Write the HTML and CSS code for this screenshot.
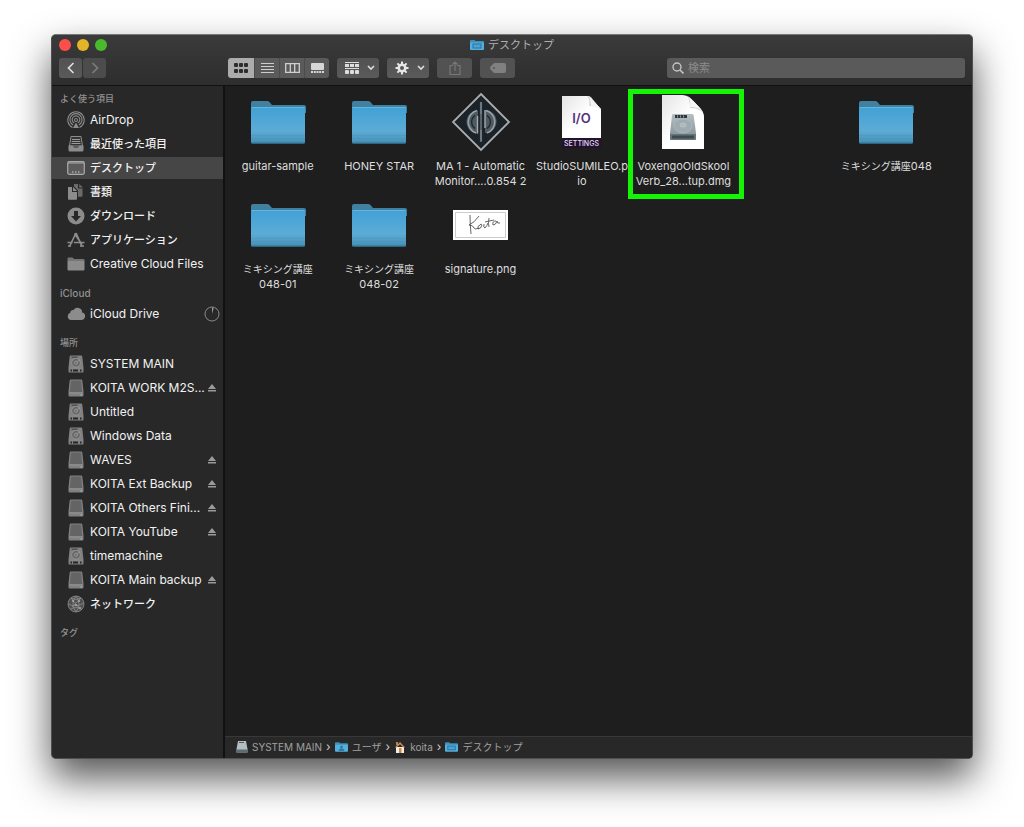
FILE: index.html
```html
<!DOCTYPE html>
<html lang="ja">
<head>
  <meta charset="UTF-8" />
  <meta name="viewport" content="width=device-width, initial-scale=1.0" />
  <title>デスクトップ</title>
  <link rel="stylesheet" href="styles.css">
</head>
<body>
  <!-- shared icons -->
  <svg class="sprite" aria-hidden="true">
    <defs>
      <linearGradient id="blue" x1="0" y1="0" x2="0" y2="1">
        <stop offset="0" stop-color="#41a1d6" />
        <stop offset="0.65" stop-color="#5cacd5" />
        <stop offset="0.85" stop-color="#4f9bc3" />
        <stop offset="1" stop-color="#478fb4" />
      </linearGradient>
      <linearGradient id="paper" x1="0" y1="0" x2="1" y2="1">
        <stop offset="0" stop-color="#e4e4e4" />
        <stop offset="0.5" stop-color="#fff" />
      </linearGradient>
      <linearGradient id="metal" x1="0" y1="0" x2="0" y2="1">
        <stop offset="0" stop-color="#b4bfc3" />
        <stop offset="1" stop-color="#7f8f94" />
      </linearGradient>
      <symbol id="folder" viewBox="0 0 56 44">
        <path d="M1 3q0-2 2-2h14q1.500 0 2.500 1l2 2.500q.5.500 1.500.500h31q2 0 2 2v6H1z" fill="#42809f" />
        <path d="M1 7.500h54V42q0 1.500-1.500 1.500h-51Q1 43.500 1 42z" fill="url(#blue)" />
        <path d="M1.500 7.500h53" stroke="#64b6df" />
        <path d="M1 35.500h54M1 38.500h54M1 41.500h54" stroke="#3f8bb2" stroke-opacity=".25" />
        <path d="M1.500 43h53" stroke="#2f7397" />
      </symbol>
      <symbol id="mini-folder" viewBox="0 0 14 12">
        <path d="M0 2q0-1 1-1h3.500l1 1H13q1 0 1 1v3H0z" fill="#3d8fbc" />
        <path d="M0 3.500h14V10q0 1-1 1H1q-1 0-1-1z" fill="#55afdc" />
      </symbol>
      <symbol id="drive" viewBox="0 0 16 18">
        <path d="M2.800.500h10.400q1 0 1.100 1l1.200 11v4q0 1-1 1h-13q-1 0-1-1v-4l1.200-11q.1-1 1.100-1z" fill="#808080" />
        <path d="M3 1.500h10l1.200 11.500H1.800z" fill="#646464" />
        <path d="M1.200 14h13.600" stroke="#949494" />
        <path d="M12.500 16h1.500" stroke="#bbb" />
      </symbol>
      <symbol id="disk" viewBox="0 0 16 18">
        <path d="M2.800.500h10.400q1 0 1.100 1l1.200 11v4q0 1-1 1h-13q-1 0-1-1v-4l1.200-11q.1-1 1.100-1z" fill="#808080" />
        <path d="M3.500 2.200h6" stroke="#3a3a3a" />
        <circle cx="8" cy="7.700" r="4.300" fill="#666" stroke="#999" stroke-width=".8" />
        <circle cx="8" cy="7.700" r="1.600" fill="none" stroke="#a4a4a4" stroke-width=".8" />
        <path d="M9 7.500l2.500-3" stroke="#a4a4a4" stroke-width=".8" />
        <path d="M1 13h14" stroke="#8c8c8c" />
        <path d="M2.500 15.500h1.500M5 15.500h5M12 15.500h1.500" stroke="#262626" stroke-width="2" />
      </symbol>
      <symbol id="eject" viewBox="0 0 8 8">
        <path d="M4 0l4 5H0zM0 6h8v1.500H0z" fill="#9a9a9a" />
      </symbol>
      <symbol id="chevron" viewBox="0 0 8 6">
        <path d="M1 1l3 3 3-3" fill="none" stroke="#dedede" stroke-width="1.600" />
      </symbol>
    </defs>
  </svg>

  <main class="window">
    <header class="titlebar">
      <div class="title-row">
        <div class="lights">
          <button class="light close" aria-label="閉じる"></button>
          <button class="light minimize" aria-label="しまう"></button>
          <button class="light full" aria-label="拡大"></button>
        </div>
        <h1 class="title">
          <svg class="title-icon" viewBox="0 0 14 12"><use href="#mini-folder" /><rect x="3" y="5" width="8" height="4" fill="#4aa3d4" stroke="#2a72a0" /></svg>
          デスクトップ
        </h1>
      </div>
      <div class="toolbar">
        <div class="nav">
          <button class="tool back" aria-label="戻る">
            <svg width="8" height="12" viewBox="0 0 8 12"><path d="M6.500 1L1.500 6l5 5" fill="none" stroke="#ddd" stroke-width="1.700" /></svg>
          </button>
          <button class="tool forward" aria-label="進む">
            <svg width="8" height="12" viewBox="0 0 8 12"><path d="M1.500 1l5 5-5 5" fill="none" stroke="#7c7c7c" stroke-width="1.700" /></svg>
          </button>
        </div>
        <div class="views">
          <button class="view active" aria-label="アイコン">
            <svg width="14" height="10" viewBox="0 0 14 10" fill="#2c2c2c"><rect width="4" height="4" rx="1" /><rect x="5" width="4" height="4" rx="1" /><rect x="10" width="4" height="4" rx="1" /><rect y="6" width="4" height="4" rx="1" /><rect x="5" y="6" width="4" height="4" rx="1" /><rect x="10" y="6" width="4" height="4" rx="1" /></svg>
          </button>
          <button class="view" aria-label="リスト">
            <svg width="13" height="10" viewBox="0 0 13 10"><path d="M0 .500h13M0 3.500h13M0 6.500h13M0 9.500h13" stroke="#ccc" /></svg>
          </button>
          <button class="view" aria-label="カラム">
            <svg width="15" height="10" viewBox="0 0 15 10"><path d="M.700.700h13.600v8.600H.700zM5.300.500v9M9.700.500v9" fill="none" stroke="#d0d0d0" stroke-width="1.300" /></svg>
          </button>
          <button class="view" aria-label="ギャラリー">
            <svg width="13" height="10" viewBox="0 0 13 10" fill="#d6d6d6"><rect width="13" height="7" rx="1" /><path d="M0 8h2v2H0zM2.800 8h2v2h-2zM5.500 8h2v2h-2zM8.200 8h2v2h-2zM11 8h2v2h-2z" /></svg>
          </button>
        </div>
        <button class="tool menu" aria-label="グループ分け">
          <svg width="14" height="12" viewBox="0 0 14 12" fill="#ddd"><path d="M0 0h14v1H0zM0 6h14v1H0z" /><rect y="2" width="4" height="3" /><rect x="5" y="2" width="4" height="3" /><rect x="10" y="2" width="4" height="3" /><rect y="8" width="4" height="4" rx="1" /><rect x="5" y="8" width="4" height="4" rx="1" /><rect x="10" y="8" width="4" height="4" rx="1" /></svg>
          <svg width="8" height="6"><use href="#chevron" /></svg>
        </button>
        <button class="tool menu" aria-label="アクション">
          <svg width="14" height="14" viewBox="-7 -7 14 14"><circle r="3.300" fill="none" stroke="#e6e6e6" stroke-width="2.600" /><path d="M0-6.500v2.500M0 4v2.500M-6.500 0h2.500M4 0h2.500M-4.600-4.600l1.800 1.800M2.800 2.800l1.800 1.800M-4.600 4.600l1.800-1.800M2.800-2.800l1.800-1.800" stroke="#e6e6e6" stroke-width="2" /></svg>
          <svg width="8" height="6"><use href="#chevron" /></svg>
        </button>
        <button class="tool single" aria-label="共有" disabled>
          <svg width="12" height="14" viewBox="0 0 12 14"><path d="M4 4.500H1v9h10v-9H8M6 10V1M3.500 3.500L6 1l2.500 2.500" fill="none" stroke="#777" stroke-width="1.200" /></svg>
        </button>
        <button class="tool single" aria-label="タグ" disabled>
          <svg width="16" height="10" viewBox="0 0 16 10"><path d="M4.500 0H14q2 0 2 2v6q0 2-2 2H4.500Q4 10 3 9L.500 6.200Q-.3 5 .500 3.800L3 1q1-1 1.500-1z" fill="#808080" /><circle cx="4" cy="5" r="1" fill="#555" /></svg>
        </button>
        <label class="search">
          <svg width="12" height="12" viewBox="0 0 12 12"><circle cx="5" cy="5" r="4" fill="none" stroke="#c4c4c4" stroke-width="1.400" /><path d="M8 8l3.500 3.500" stroke="#c4c4c4" stroke-width="1.600" /></svg>
          <input type="search" placeholder="検索" aria-label="検索" />
        </label>
      </div>
    </header>

    <div class="body">
      <nav class="sidebar">
        <h2 class="ja">よく使う項目</h2>
        <a href="#"><svg viewBox="0 0 18 18" fill="none" stroke="#8c8c8c" stroke-width="1.100"><path d="M5.500 16.400a8.200 8.200 0 1 1 7 0M6.200 13.900a6 6 0 1 1 5.600 0M7.200 12a3.800 3.800 0 1 1 3.600 0" /><circle cx="9" cy="9" r="1.500" /><path d="M9 11.500l-3 5.500h6z" fill="#8c8c8c" stroke="none" /></svg><span>AirDrop</span></a>
        <a href="#"><svg viewBox="0 0 18 18"><path d="M4 1.500h10l1.500 9.500H2.500z" fill="#333" stroke="#8c8c8c" /><path d="M5 4.500h8M4.700 6.500h8.600M4.500 8.500h9" stroke="#999" /><path d="M1.500 10.500h4l1.500 2h4l1.500-2h4V15q0 1.500-1.500 1.500H3Q1.500 16.500 1.500 15z" fill="#8c8c8c" /></svg><span class="ja">最近使った項目</span></a>
        <a href="#" class="selected"><svg viewBox="0 0 18 18"><rect x=".7" y="2.700" width="16.600" height="12.600" rx="1.500" fill="#5c5c5c" stroke="#aaa" stroke-width="1.200" /><path d="M1 4h16" stroke="#aaa" /><path d="M5 13h1.500M8 13h1.500M11 13h1.500" stroke="#ccc" /></svg><span class="ja">デスクトップ</span></a>
        <a href="#"><svg viewBox="0 0 18 18"><path d="M1 4h4v5h5v7q0 .800-.8.800H1.800Q1 16.800 1 16zM6 4l4 4H6z" fill="#8c8c8c" /><path d="M7 1h4v4.500h4.500V13q0 .800-.8.800H11V7.500L7 3.500zM12.200 1l3.800 3.500h-3.800z" fill="#6a6a6a" /></svg><span class="ja">書類</span></a>
        <a href="#"><svg viewBox="0 0 18 18"><circle cx="9" cy="9" r="8.500" fill="#8c8c8c" /><path d="M7 4h4v5h3l-5 5.500L4 9h3z" fill="#282828" /></svg><span class="ja">ダウンロード</span></a>
        <a href="#"><svg viewBox="0 0 18 18" fill="none" stroke="#8c8c8c"><path d="M9 2L2.500 15.500M9 2l6 13.500M7.500 2.500l7.500 11" stroke-width="1.700" /><path d="M.500 11.500h5M7 11.500h10.500M1 15h3M13 15h4" stroke-width="1.400" /></svg><span class="ja">アプリケーション</span></a>
        <a href="#"><svg viewBox="0 0 18 18"><path d="M.500 3.500q0-1 1-1h4l1.500 1.500h9.500q1 0 1 1v1H.500z" fill="#757575" /><path d="M.500 6h17v8.500q0 1-1 1h-15q-1 0-1-1z" fill="#8c8c8c" /></svg><span>Creative Cloud Files</span></a>

        <h2>iCloud</h2>
        <a href="#"><svg viewBox="0 0 18 18"><path d="M4 15a3.700 3.700 0 0 1-.7-7.200A3 3 0 0 1 6.500 5a4.700 4.700 0 0 1 8.700 2.500A3.800 3.800 0 0 1 14.500 15z" fill="#8c8c8c" /></svg><span>iCloud Drive</span><svg class="progress" viewBox="0 0 16 16"><circle cx="8" cy="8" r="7" fill="none" stroke="#8a8a8a" /><path d="M8 8V1.500l1.700.4z" fill="#999" /></svg></a>

        <h2 class="ja">場所</h2>
        <a href="#"><svg><use href="#disk" /></svg><span>SYSTEM MAIN</span></a>
        <a href="#"><svg><use href="#drive" /></svg><span>KOITA WORK M2S...</span><svg class="eject"><use href="#eject" /></svg></a>
        <a href="#"><svg><use href="#disk" /></svg><span>Untitled</span></a>
        <a href="#"><svg><use href="#disk" /></svg><span>Windows Data</span></a>
        <a href="#"><svg><use href="#drive" /></svg><span>WAVES</span><svg class="eject"><use href="#eject" /></svg></a>
        <a href="#"><svg><use href="#drive" /></svg><span>KOITA Ext Backup</span><svg class="eject"><use href="#eject" /></svg></a>
        <a href="#"><svg><use href="#drive" /></svg><span>KOITA Others Fini...</span><svg class="eject"><use href="#eject" /></svg></a>
        <a href="#"><svg><use href="#drive" /></svg><span>KOITA YouTube</span><svg class="eject"><use href="#eject" /></svg></a>
        <a href="#"><svg><use href="#disk" /></svg><span>timemachine</span></a>
        <a href="#"><svg><use href="#drive" /></svg><span>KOITA Main backup</span><svg class="eject"><use href="#eject" /></svg></a>
        <a href="#"><svg viewBox="0 0 18 18" fill="none" stroke="#8c8c8c" stroke-width=".8"><circle cx="9" cy="9" r="8" fill="#505050" /><path d="M1 9q8 4 16-1M4 3q5 3 10 0M3 14.500q6-4 12 0M9 1q-6 8 0 16M9 1q6 8 0 16M4 3l9 11M14 3L5 12" /><g fill="#aaa" stroke="none"><circle cx="6" cy="6" r="1" /><circle cx="12" cy="6" r="1" /><circle cx="9" cy="10" r="1" /><circle cx="13" cy="13" r="1" /></g></svg><span class="ja">ネットワーク</span></a>

        <h2 class="ja">タグ</h2>
      </nav>

      <section class="content">
        <ul class="files">
          <li>
            <div class="icon"><svg class="folder"><use href="#folder" /></svg></div>
            <p>guitar-sample</p>
          </li>
          <li>
            <div class="icon"><svg class="folder"><use href="#folder" /></svg></div>
            <p>HONEY STAR</p>
          </li>
          <li>
            <div class="icon">
              <svg width="60" height="60" viewBox="-30 -30 60 60">
                <path d="M0-28L28 0 0 28-28 0z" fill="#1b2228" stroke="#a9adb0" stroke-width="1.800" />
                <g fill="none">
                  <path d="M-3-11.500a11.500 11.500 0 0 0 0 23z" fill="#4e5960" />
                  <path d="M4-12v23a11.500 11.500 0 0 0 0-23z" fill="#4e5960" />
                  <path d="M-4-11.500a11.800 11.800 0 0 0-1 22.500M5-11.500a11.800 11.800 0 0 1 1 22.500" stroke="#99a1a5" stroke-width="1.600" />
                  <path d="M-6-6.500a8 8 0 0 0 0 13M6-6.500a8 8 0 0 1 0 13" stroke="#1b2228" stroke-width="1.200" />
                  <path d="M-3.500-6v17.500M4-12V6" stroke="#a3abb0" stroke-width="1.400" />
                  <path d="M0-20v40" stroke="#56636b" stroke-width="2.200" />
                  <path d="M0-20v12M0 8v11" stroke="#839098" />
                </g>
              </svg>
            </div>
            <p>MA 1 - Automatic<br>Monitor....0.854 2</p>
          </li>
          <li>
            <div class="icon">
              <svg width="42" height="54" viewBox="0 0 42 54">
                <path d="M1 1h27l12 13v30H1z" fill="url(#paper)" />
                <path d="M26 1q3 2 2.500 10 7-.5 11.500 4L30 2z" fill="#c8c8c8" />
                <path d="M28 1l12 13q-4-2-10-2-.5-7-2-11z" fill="#f4f4f4" />
                <path d="M1 43h39v10H1z" fill="#211230" />
                <text x="20.500" y="28" class="io" text-anchor="middle">I/O</text>
                <text x="20.500" y="50.500" class="settings" text-anchor="middle">SETTINGS</text>
              </svg>
            </div>
            <p>StudioSUMILEO.p<br>io</p>
          </li>
          <li class="marked">
            <div class="icon">
              <svg width="42" height="56" viewBox="0 0 42 56">
                <path d="M0 1h20q5 0 9 4l9 9q4 4 4 9v32H0z" fill="url(#paper)" />
                <path d="M24 1q4 2 4 13 9-.5 13 5-1-3-4-6l-8-8q-3-3-5-4z" fill="#ccc" />
                <path d="M25 2q4 2 3 11 8 0 12 4-9-12-15-15z" fill="#f7f7f7" />
                <path d="M11 20h19q1.500 0 1.700 1.500L34 39v5.500q0 1.500-1.500 1.500h-23Q8 46 8 44.500V39l2-17.500Q10 20 11 20z" fill="url(#metal)" />
                <path d="M8 40h26v4.500q0 1.500-1.500 1.500h-23Q8 46 8 44.500z" fill="#66757a" />
                <path d="M10 43h22" stroke="#3f4a4e" stroke-width="3" />
                <path d="M13 22.500h12" stroke="#30393c" stroke-width="3" />
                <path d="M15 22.500h1M18 22.500h1M21 22.500h1" stroke="#8fa0a5" stroke-width="2" />
                <ellipse cx="21" cy="32" rx="9" ry="7" fill="#9eabb0" stroke="#b0bbbf" stroke-width=".7" />
                <ellipse cx="21" cy="31" rx="3" ry="2" fill="#acb8bc" stroke="#bfc8cb" stroke-width=".7" />
              </svg>
            </div>
            <p>VoxengoOldSkool<br>Verb_28...tup.dmg</p>
          </li>
          <li class="last-column">
            <div class="icon"><svg class="folder"><use href="#folder" /></svg></div>
            <p><span class="ja">ミキシング講座</span>048</p>
          </li>
          <li>
            <div class="icon"><svg class="folder"><use href="#folder" /></svg></div>
            <p><span class="ja">ミキシング講座</span><br>048-01</p>
          </li>
          <li>
            <div class="icon"><svg class="folder"><use href="#folder" /></svg></div>
            <p><span class="ja">ミキシング講座</span><br>048-02</p>
          </li>
          <li>
            <div class="icon">
              <svg width="55" height="30" viewBox="0 0 55 30">
                <path d="M0 0h55v30H0z" fill="#fff" />
                <path d="M2.500 2.500h50v25h-50z" fill="none" stroke="#ccc" />
                <path d="M17 5q0 9 1 19M26 6q-5 7-10 9 4 0 5 3 1 2 5 0M27 15q-3 1-2 4 3 0 4-4 0-1-2-.500M31 14q-1 4 1 4 2-2 3-5M36 8q-1 6 0 9M32 12q4-1 9-2M43 11q-4 0-3 4 3 0 4-4 0 3 3 2" fill="none" stroke="#555" stroke-width=".9" />
              </svg>
            </div>
            <p>signature.png</p>
          </li>
        </ul>

        <footer class="pathbar">
          <a href="#"><svg width="12" height="12" viewBox="0 0 12 12"><path d="M2 0h8l1.500 8v3.500H.500V8z" fill="#b3bec2" /><path d="M.500 8.500h11v3H.500z" fill="#5c6b70" /><path d="M3 1.500h5" stroke="#525c60" /></svg>SYSTEM MAIN</a>
          <i>›</i>
          <a href="#"><svg width="13" height="12" viewBox="0 0 14 12"><use href="#mini-folder" /><circle cx="7" cy="6" r="1.400" fill="#2a72a0" /><path d="M4 10q0-2.500 3-2.500t3 2.500z" fill="#2a72a0" /></svg>ユーザ</a>
          <i>›</i>
          <a href="#"><svg width="12" height="12" viewBox="0 0 12 12"><path d="M2 6h8v6H2z" fill="#eee" /><path d="M2 1h2v3H2z" fill="#b88355" /><path d="M6 1L.800 6.500h1.800L6 3.300l3.400 3.200h1.800z" fill="#c98b4e" /><path d="M5 7h2.500v5H5z" fill="#d8852e" /></svg>koita</a>
          <i>›</i>
          <a href="#"><svg width="13" height="12" viewBox="0 0 14 12"><use href="#mini-folder" /><rect x="3" y="5" width="8" height="4" fill="#4aa3d4" stroke="#2a72a0" /></svg>デスクトップ</a>
        </footer>
      </section>
    </div>
  </main>
</body>
</html>
```

FILE: styles.css
```css
* {
  box-sizing: border-box;
}

body {
  display: flex;
  min-height: 100vh;
  margin: 0;
  padding: 34px 51px 68px;
  background: #fff;
  color: #dedede;
  font-family: Inter, "Noto Sans CJK JP", sans-serif;
  font-size: 12px;
}

h1, h2, p, ul {
  margin: 0;
  padding: 0;
  font-weight: 400;
}

a {
  color: inherit;
  text-decoration: none;
}

button {
  padding: 0;
  border: none;
}

svg {
  display: block;
  flex-shrink: 0;
}

.sprite {
  position: absolute;
  width: 0;
  height: 0;
}

.window {
  display: flex;
  flex: 1;
  flex-direction: column;
  min-width: 0;
  overflow: hidden;
  border: 1px solid #505050;
  border-top-color: #777;
  border-radius: 5px;
  background: #282828;
  box-shadow: 0 19px 38px rgba(0, 0, 0, 0.67);
}

/* title bar */

.titlebar {
  padding: 0 7px 7px;
  border-bottom: 1px solid #111;
  background: linear-gradient(#3a3a3a, #2e2e2e);
}

.title-row {
  display: grid;
  grid-template-columns: 1fr auto 1fr;
  align-items: center;
  height: 20px;
  margin-bottom: 3px;
}

.lights {
  display: flex;
  gap: 6px;
}

.light {
  width: 12px;
  height: 12px;
  border-radius: 50%;
}

.close {
  background: #fc4f49;
}

.minimize {
  background: #e3b428;
}

.full {
  background: #4aba2c;
}

.title {
  display: flex;
  align-items: center;
  gap: 4px;
  color: #b0b0b0;
  font-size: 11px;
  line-height: 20px;
}

.title-icon {
  width: 14px;
  height: 12px;
}

.toolbar {
  display: flex;
  gap: 8px;
  height: 20px;
}

.nav {
  display: flex;
  gap: 1px;
  width: 161px;
}

.tool {
  display: flex;
  align-items: center;
  justify-content: center;
  border-radius: 3px;
  background: linear-gradient(#525252, #5a5a5a);
}

.back, .forward {
  width: 23px;
}

.forward {
  background: #4c4c4c;
}

.views {
  display: flex;
  overflow: hidden;
  border-radius: 3px;
}

.view {
  display: flex;
  align-items: center;
  justify-content: center;
  width: 25px;
  border-left: 1px solid #4c4c4c;
  background: #5a5a5a;
}

.view.active {
  width: 26px;
  border-left: none;
  background: #acacac;
}

.menu {
  gap: 8px;
  width: 42px;
  padding-left: 4px;
}

.single {
  width: 35px;
  background: #525252;
}

.search {
  display: flex;
  flex: 0 1 298px;
  align-items: center;
  gap: 4px;
  min-width: 0;
  margin-left: auto;
  padding: 0 5px;
  border-radius: 3px;
  background: #5a5a5a;
}

.search input {
  flex: 1;
  min-width: 0;
  padding: 0;
  border: none;
  outline: none;
  background: none;
  color: #ddd;
  font: inherit;
  font-size: 11px;
}

.search input::placeholder {
  color: #8c8c8c;
}

/* sidebar */

.body {
  display: flex;
  flex: 1;
}

.sidebar {
  display: flex;
  flex-direction: column;
  width: 173px;
  border-right: 2px solid #111;
}

.sidebar h2 {
  padding: 8px 8px 0;
  color: #929292;
  font-size: 10px;
  font-weight: 500;
  line-height: 18px;
}

.sidebar h2:first-child {
  padding-top: 4px;
}

.sidebar h2.ja {
  font-size: 9px;
}

.sidebar a {
  display: flex;
  align-items: center;
  gap: 5px;
  height: 22px;
  margin: 1px 0;
  padding: 0 3px 0 15px;
  color: #f2f2f2;
  line-height: 22px;
}

.sidebar a span {
  flex: 1;
  min-width: 0;
  white-space: nowrap;
}

.sidebar a .ja {
  font-size: 11px;
  font-weight: 500;
}

.sidebar svg {
  width: 18px;
  height: 18px;
}

.sidebar .eject {
  width: 8px;
  height: 8px;
  margin-right: 4px;
}

.sidebar .progress {
  width: 16px;
  height: 16px;
}

.sidebar .selected {
  background: #464646;
}

/* files */

.content {
  display: flex;
  flex: 1;
  flex-direction: column;
  min-width: 0;
  background: #1e1e1e;
}

.files {
  display: grid;
  flex: 1;
  grid-template-columns: repeat(7, 1fr);
  align-content: start;
  row-gap: 5px;
  padding: 5px 35px 5px 2px;
  font-size: 11px;
  line-height: 15px;
  list-style: none;
  text-align: center;
}

.files li {
  position: relative;
  min-width: 0;
  min-height: 98px;
  white-space: nowrap;
}

.files .ja {
  font-size: 10px;
}

.icon {
  display: flex;
  align-items: center;
  justify-content: center;
  height: 64px;
  margin-bottom: 4px;
  padding-bottom: 2px;
}

.folder {
  width: 56px;
  height: 44px;
}

.io {
  fill: #56307a;
  font-size: 13px;
  font-weight: 600;
}

.settings {
  fill: #e6dcf0;
  font-size: 7px;
  font-weight: 500;
}

.last-column {
  grid-column: 7;
}

.marked::after {
  position: absolute;
  inset: -2px -10px -10px -5px;
  border: 5px solid #14f505;
  content: "";
}

/* path bar */

.pathbar {
  display: flex;
  align-items: center;
  gap: 4px;
  height: 22px;
  padding: 0 11px 2px;
  border-top: 1px solid #383838;
  background: #282828;
  color: #a0a0a0;
  font-size: 10px;
}

.pathbar a {
  display: flex;
  align-items: center;
  gap: 4px;
}

.pathbar i {
  color: #ccc;
  font-size: 12px;
  font-style: normal;
}
```
